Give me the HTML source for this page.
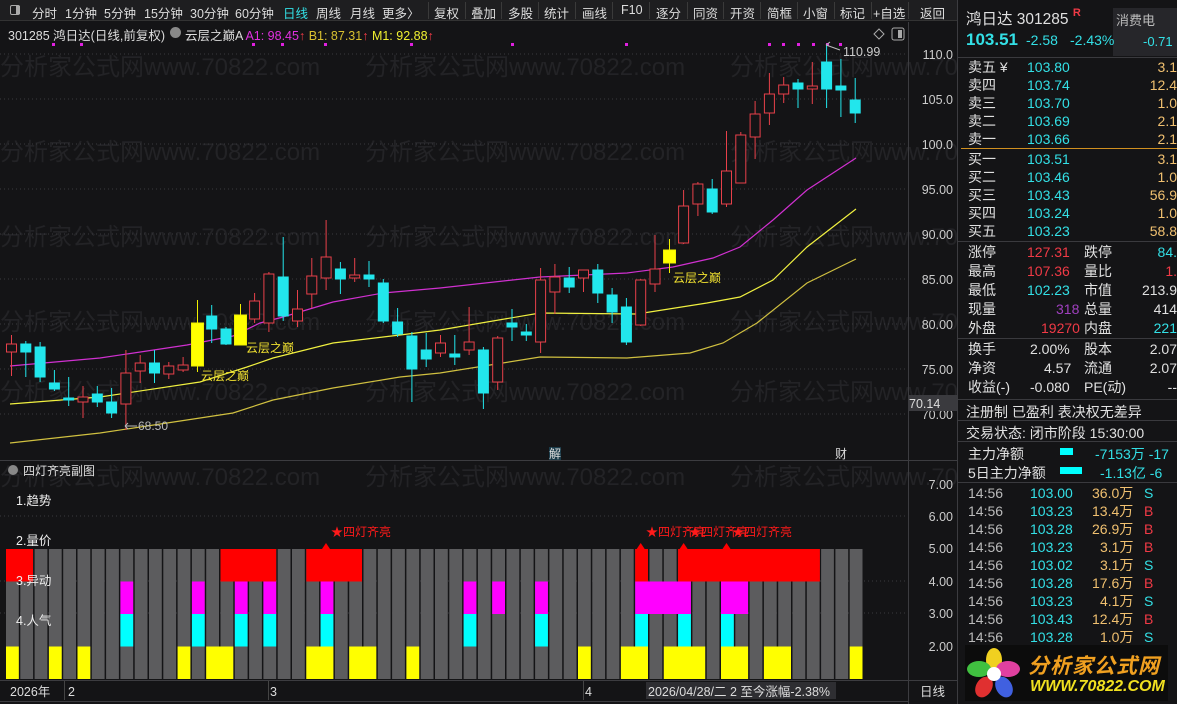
<!DOCTYPE html>
<html><head><meta charset="utf-8"><style>
*{margin:0;padding:0;box-sizing:border-box}
body{width:1177px;height:704px;background:#141416;overflow:hidden;position:relative;font-family:"Liberation Sans","Noto Sans CJK SC",sans-serif;color:#ddd}
.a{position:absolute;white-space:nowrap}
.tb{position:absolute;top:0;left:0;width:958px;height:21px;background:#1e1e20;border-bottom:1px solid #333;font-size:12.5px;color:#ddd}
.tb span{position:absolute;top:3px}
.sep{position:absolute;top:2px;width:1px;height:17px;background:#3a3a3a}
.rp{font-size:14px}
.c{color:#33e0e6}.rd{color:#f03a46}.o{color:#f0c070}.w{color:#e0e0e0}.g{color:#bbb}
.r{text-align:right}
</style></head><body>
<div class="tb">
<div style="position:absolute;left:10px;top:5px;width:10px;height:10px;border:1px solid #aaa;border-radius:2px"><div style="position:absolute;left:5px;top:0;width:4px;height:8px;background:#aaa"></div></div>
<span style="left:32px">分时</span><span style="left:65px">1分钟</span><span style="left:104px">5分钟</span><span style="left:144px">15分钟</span><span style="left:190px">30分钟</span><span style="left:235px">60分钟</span><span style="left:283px;color:#33e0e6">日线</span><span style="left:316px">周线</span><span style="left:350px">月线</span><span style="left:382px">更多〉</span>
<div class="sep" style="left:428px"></div><span style="left:434px">复权</span>
<div class="sep" style="left:465px"></div><span style="left:471px">叠加</span>
<div class="sep" style="left:501px"></div><span style="left:508px">多股</span>
<div class="sep" style="left:538px"></div><span style="left:544px">统计</span>
<div class="sep" style="left:575px"></div><span style="left:582px">画线</span>
<div class="sep" style="left:612px"></div><span style="left:621px">F10</span>
<div class="sep" style="left:649px"></div><span style="left:656px">逐分</span>
<div class="sep" style="left:687px"></div><span style="left:693px">同资</span>
<div class="sep" style="left:723px"></div><span style="left:730px">开资</span>
<div class="sep" style="left:760px"></div><span style="left:767px">简框</span>
<div class="sep" style="left:797px"></div><span style="left:803px">小窗</span>
<div class="sep" style="left:834px"></div><span style="left:840px">标记</span>
<div class="sep" style="left:871px"></div><span style="left:873px">+自选</span>
<div class="sep" style="left:908px"></div><span style="left:920px">返回</span>
</div>
<div class="a" style="left:8px;top:25px;font-size:12.5px;color:#ddd">301285 鸿日达(日线,前复权)</div>
<div class="a" style="left:170px;top:27px;width:11px;height:11px;border-radius:50%;background:#888"></div>
<div class="a" style="left:185px;top:25px;font-size:12.5px;color:#ddd">云层之巅A <span style="color:#e030e0">A1: 98.45</span><span style="color:#f03a46">↑</span> <span style="color:#d8c030">B1: 87.31</span><span style="color:#f03a46">↑</span> <span style="color:#f0f030">M1: 92.88</span><span style="color:#f03a46">↑</span></div>

<svg class="a" style="left:0;top:0" width="958" height="704">
<g fill="#232326" font-size="24" font-family="Liberation Sans,Noto Sans CJK SC,sans-serif">
<text x="0" y="75">分析家公式网www.70822.com</text><text x="365" y="75">分析家公式网www.70822.com</text><text x="730" y="75">分析家公式网www.70822.com</text>
<text x="0" y="160">分析家公式网www.70822.com</text><text x="365" y="160">分析家公式网www.70822.com</text><text x="730" y="160">分析家公式网www.70822.com</text>
<text x="0" y="245">分析家公式网www.70822.com</text><text x="365" y="245">分析家公式网www.70822.com</text><text x="730" y="245">分析家公式网www.70822.com</text>
<text x="0" y="330">分析家公式网www.70822.com</text><text x="365" y="330">分析家公式网www.70822.com</text><text x="730" y="330">分析家公式网www.70822.com</text>
<text x="0" y="400">分析家公式网www.70822.com</text><text x="365" y="400">分析家公式网www.70822.com</text><text x="730" y="400">分析家公式网www.70822.com</text>
<text x="0" y="485">分析家公式网www.70822.com</text><text x="365" y="485">分析家公式网www.70822.com</text><text x="730" y="485">分析家公式网www.70822.com</text>
</g>
<g stroke="#3a3a3e" stroke-dasharray="1 3">
<line x1="0" x2="908" y1="54" y2="54"/><line x1="0" x2="908" y1="99" y2="99"/><line x1="0" x2="908" y1="144" y2="144"/><line x1="0" x2="908" y1="189" y2="189"/><line x1="0" x2="908" y1="234" y2="234"/><line x1="0" x2="908" y1="279" y2="279"/><line x1="0" x2="908" y1="324" y2="324"/><line x1="0" x2="908" y1="369" y2="369"/><line x1="0" x2="908" y1="414" y2="414"/>
<line x1="0" x2="908" y1="516" y2="516"/><line x1="0" x2="908" y1="581" y2="581"/><line x1="0" x2="908" y1="613" y2="613"/>
</g>
<g stroke="#3c3c40"><line x1="908.5" x2="908.5" y1="22" y2="704"/><line x1="957.5" x2="957.5" y1="0" y2="704"/><line x1="0" x2="958" y1="460.5" y2="460.5"/><line x1="0" x2="958" y1="680.5" y2="680.5"/><line x1="0" x2="908" y1="701.5" y2="701.5"/></g>
<g fill="#e020e0"><rect x="52" y="43" width="3" height="3"/><rect x="80" y="43" width="3" height="3"/><rect x="252" y="43" width="3" height="3"/><rect x="281" y="43" width="3" height="3"/><rect x="324" y="43" width="3" height="3"/><rect x="410" y="43" width="3" height="3"/><rect x="511" y="43" width="3" height="3"/><rect x="625" y="43" width="3" height="3"/><rect x="768" y="43" width="3" height="3"/><rect x="782" y="43" width="3" height="3"/><rect x="797" y="43" width="3" height="3"/><rect x="812" y="43" width="3" height="3"/><rect x="826" y="43" width="3" height="3"/><rect x="839" y="43" width="3" height="3"/></g>
<path d="M874 34l5-5 5 5-5 5z" fill="none" stroke="#aaa"/>
<rect x="892" y="28" width="12" height="12" rx="2" fill="none" stroke="#aaa"/><rect x="898" y="30" width="4" height="8" fill="#aaa"/>
<polyline fill="none" stroke="#d030d0" stroke-width="1.2" points="10,366 100,358 187,345 233,336 260,323 283,317 333,302 383,293 440,288 540,277 627,273 673,267 713,258 740,247 773,220 807,190 856,158"/>
<polyline fill="none" stroke="#f0f040" stroke-width="1.2" points="10,404 100,397 200,382 247,367 273,358 333,343 400,335 440,330 540,313 637,314 707,303 740,297 773,280 807,247 856,209"/>
<polyline fill="none" stroke="#d0c040" stroke-width="1.2" points="10,443 100,433 167,423 233,413 273,400 333,388 400,377 440,373 540,357 627,358 690,353 723,343 757,323 807,283 856,259"/>
<g stroke="#e8404a" fill="#141416">
<line x1="11.5" x2="11.5" y1="335" y2="376"/><rect x="6.5" y="344" width="10" height="8"/>
<line x1="83" x2="83" y1="386" y2="418"/><rect x="78" y="397" width="10" height="5"/>
<line x1="125.9" x2="125.9" y1="350" y2="430"/><rect x="120.9" y="373" width="10" height="31"/>
<line x1="140.2" x2="140.2" y1="355" y2="383"/><rect x="135.2" y="363" width="10" height="8"/>
<line x1="168.8" x2="168.8" y1="362" y2="379"/><rect x="163.8" y="366" width="10" height="8"/>
<line x1="183.1" x2="183.1" y1="357" y2="372"/><rect x="178.1" y="365" width="10" height="5"/>
<line x1="254.6" x2="254.6" y1="293" y2="323"/><rect x="249.6" y="301" width="10" height="18"/>
<line x1="268.9" x2="268.9" y1="272" y2="332"/><rect x="263.9" y="274" width="10" height="49"/>
<line x1="297.5" x2="297.5" y1="290" y2="327"/><rect x="292.5" y="309" width="10" height="12"/>
<line x1="311.8" x2="311.8" y1="258" y2="308"/><rect x="306.8" y="276" width="10" height="18"/>
<line x1="326.1" x2="326.1" y1="220" y2="290"/><rect x="321.1" y="257" width="10" height="21"/>
<line x1="354.7" x2="354.7" y1="258" y2="282"/><rect x="349.7" y="275" width="10" height="3"/>
<line x1="440.5" x2="440.5" y1="335" y2="357"/><rect x="435.5" y="343" width="10" height="10"/>
<line x1="469.1" x2="469.1" y1="307" y2="355"/><rect x="464.1" y="342" width="10" height="8"/>
<line x1="497.7" x2="497.7" y1="336" y2="390"/><rect x="492.7" y="338" width="10" height="44"/>
<line x1="540.6" x2="540.6" y1="268" y2="353"/><rect x="535.6" y="280" width="10" height="62"/>
<line x1="554.9" x2="554.9" y1="264" y2="314"/><rect x="549.9" y="277" width="10" height="15"/>
<line x1="583.5" x2="583.5" y1="270" y2="292"/><rect x="578.5" y="270" width="10" height="8"/>
<line x1="640.7" x2="640.7" y1="279" y2="326"/><rect x="635.7" y="280" width="10" height="45"/>
<line x1="655" x2="655" y1="235" y2="292"/><rect x="650" y="269" width="10" height="15"/>
<line x1="683.6" x2="683.6" y1="190" y2="244"/><rect x="678.6" y="206" width="10" height="37"/>
<line x1="697.9" x2="697.9" y1="182" y2="216"/><rect x="692.9" y="184" width="10" height="20"/>
<line x1="726.5" x2="726.5" y1="131" y2="207"/><rect x="721.5" y="171" width="10" height="33"/>
<line x1="740.8" x2="740.8" y1="132" y2="183"/><rect x="735.8" y="135" width="10" height="48"/>
<line x1="755.1" x2="755.1" y1="101" y2="159"/><rect x="750.1" y="114" width="10" height="23"/>
<line x1="769.4" x2="769.4" y1="73" y2="125"/><rect x="764.4" y="94" width="10" height="19"/>
<line x1="783.7" x2="783.7" y1="77" y2="103"/><rect x="778.7" y="85" width="10" height="9"/>
<line x1="812.3" x2="812.3" y1="62" y2="104"/><rect x="807.3" y="86" width="10" height="3"/>
</g>
<g stroke="#22e6ec" fill="#22e6ec">
<line x1="25.8" x2="25.8" y1="341" y2="377"/><rect x="20.8" y="344" width="10" height="8"/>
<line x1="40.1" x2="40.1" y1="342" y2="382"/><rect x="35.1" y="347" width="10" height="30"/>
<line x1="54.4" x2="54.4" y1="370" y2="391"/><rect x="49.4" y="383" width="10" height="6"/>
<line x1="68.7" x2="68.7" y1="377" y2="406"/><rect x="63.7" y="398" width="10" height="2"/>
<line x1="97.3" x2="97.3" y1="386" y2="407"/><rect x="92.3" y="394" width="10" height="8"/>
<line x1="111.6" x2="111.6" y1="388" y2="418"/><rect x="106.6" y="402" width="10" height="11"/>
<line x1="154.5" x2="154.5" y1="350" y2="383"/><rect x="149.5" y="363" width="10" height="10"/>
<line x1="211.7" x2="211.7" y1="305" y2="343"/><rect x="206.7" y="316" width="10" height="13"/>
<line x1="226" x2="226" y1="327" y2="345"/><rect x="221" y="329" width="10" height="15"/>
<line x1="283.2" x2="283.2" y1="237" y2="321"/><rect x="278.2" y="277" width="10" height="39"/>
<line x1="340.4" x2="340.4" y1="262" y2="294"/><rect x="335.4" y="269" width="10" height="10"/>
<line x1="369" x2="369" y1="261" y2="287"/><rect x="364" y="275" width="10" height="4"/>
<line x1="383.3" x2="383.3" y1="279" y2="323"/><rect x="378.3" y="283" width="10" height="38"/>
<line x1="397.6" x2="397.6" y1="308" y2="337"/><rect x="392.6" y="322" width="10" height="12"/>
<line x1="411.9" x2="411.9" y1="332" y2="402"/><rect x="406.9" y="336" width="10" height="33"/>
<line x1="426.2" x2="426.2" y1="333" y2="367"/><rect x="421.2" y="350" width="10" height="9"/>
<line x1="454.8" x2="454.8" y1="335" y2="365"/><rect x="449.8" y="354" width="10" height="3"/>
<line x1="483.4" x2="483.4" y1="347" y2="409"/><rect x="478.4" y="350" width="10" height="43"/>
<line x1="512" x2="512" y1="309" y2="341"/><rect x="507" y="323" width="10" height="4"/>
<line x1="526.3" x2="526.3" y1="324" y2="341"/><rect x="521.3" y="332" width="10" height="3"/>
<line x1="569.2" x2="569.2" y1="267" y2="293"/><rect x="564.2" y="278" width="10" height="9"/>
<line x1="597.8" x2="597.8" y1="264" y2="303"/><rect x="592.8" y="270" width="10" height="23"/>
<line x1="612.1" x2="612.1" y1="288" y2="323"/><rect x="607.1" y="295" width="10" height="17"/>
<line x1="626.4" x2="626.4" y1="298" y2="345"/><rect x="621.4" y="307" width="10" height="35"/>
<line x1="712.2" x2="712.2" y1="179" y2="214"/><rect x="707.2" y="189" width="10" height="23"/>
<line x1="798" x2="798" y1="79" y2="108"/><rect x="793" y="83" width="10" height="6"/>
<line x1="826.6" x2="826.6" y1="45" y2="108"/><rect x="821.6" y="62" width="10" height="27"/>
<line x1="840.9" x2="840.9" y1="59" y2="117"/><rect x="835.9" y="86" width="10" height="4"/>
<line x1="855.2" x2="855.2" y1="78" y2="123"/><rect x="850.2" y="100" width="10" height="13"/>
</g>
<g stroke="#f0f000" fill="#ffff00">
<line x1="197.5" x2="197.5" y1="300" y2="372"/><rect x="191.5" y="323" width="12" height="43"/>
<line x1="240.5" x2="240.5" y1="304" y2="345"/><rect x="234.5" y="315" width="12" height="30"/>
<line x1="669.5" x2="669.5" y1="239" y2="273"/><rect x="663.5" y="250" width="12" height="13"/>
</g>
<path d="M826 45l14 5M826 45l4 -3" stroke="#bbb" fill="none"/>
<text x="843" y="56" fill="#ccc" font-size="12.5" font-family="Liberation Sans">110.99</text>
<path d="M125 426h12M125 426l3 -3M125 426l3 3" stroke="#bbb" fill="none"/>
<text x="138" y="430" fill="#bbb" font-size="12" font-family="Liberation Sans">68.50</text>
<g fill="#f0e030" font-size="12" font-family="Liberation Sans,Noto Sans CJK SC,sans-serif">
<text x="201" y="380">云层之巅</text><text x="246" y="352">云层之巅</text><text x="673" y="282">云层之巅</text>
</g>
<rect x="549" y="447" width="12" height="13" fill="#1a3a48"/>
<text x="549" y="458" fill="#ddd" font-size="12" font-family="Noto Sans CJK SC,sans-serif">解</text>
<text x="835" y="458" fill="#ddd" font-size="12" font-family="Noto Sans CJK SC,sans-serif">财</text>
<g fill="#ccc" font-size="12.5" font-family="Liberation Sans" text-anchor="end">
<text x="953" y="59">110.0</text><text x="953" y="104">105.0</text><text x="953" y="149">100.0</text><text x="953" y="194">95.00</text><text x="953" y="239">90.00</text><text x="953" y="284">85.00</text><text x="953" y="329">80.00</text><text x="953" y="374">75.00</text><text x="953" y="419">70.00</text>
<text x="953" y="489">7.00</text><text x="953" y="521">6.00</text><text x="953" y="553">5.00</text><text x="953" y="586">4.00</text><text x="953" y="618">3.00</text><text x="953" y="651">2.00</text>
</g>
<rect x="908" y="395" width="49" height="16" fill="#3a3a3e"/>
<text x="909" y="408" fill="#ddd" font-size="12.5" font-family="Liberation Sans">70.14</text>
<g fill="#5c5c5e">
<rect x="6" y="549" width="12.8" height="130"/><rect x="20.3" y="549" width="12.8" height="130"/><rect x="34.6" y="549" width="12.8" height="130"/><rect x="48.9" y="549" width="12.8" height="130"/><rect x="63.2" y="549" width="12.8" height="130"/><rect x="77.5" y="549" width="12.8" height="130"/><rect x="91.8" y="549" width="12.8" height="130"/><rect x="106.1" y="549" width="12.8" height="130"/><rect x="120.4" y="549" width="12.8" height="130"/><rect x="134.7" y="549" width="12.8" height="130"/><rect x="149" y="549" width="12.8" height="130"/><rect x="163.3" y="549" width="12.8" height="130"/><rect x="177.6" y="549" width="12.8" height="130"/><rect x="191.9" y="549" width="12.8" height="130"/><rect x="206.2" y="549" width="12.8" height="130"/><rect x="220.5" y="549" width="12.8" height="130"/><rect x="234.8" y="549" width="12.8" height="130"/><rect x="249.1" y="549" width="12.8" height="130"/><rect x="263.4" y="549" width="12.8" height="130"/><rect x="277.7" y="549" width="12.8" height="130"/><rect x="292" y="549" width="12.8" height="130"/><rect x="306.3" y="549" width="12.8" height="130"/><rect x="320.6" y="549" width="12.8" height="130"/><rect x="334.9" y="549" width="12.8" height="130"/><rect x="349.2" y="549" width="12.8" height="130"/><rect x="363.5" y="549" width="12.8" height="130"/><rect x="377.8" y="549" width="12.8" height="130"/><rect x="392.1" y="549" width="12.8" height="130"/><rect x="406.4" y="549" width="12.8" height="130"/><rect x="420.7" y="549" width="12.8" height="130"/><rect x="435" y="549" width="12.8" height="130"/><rect x="449.3" y="549" width="12.8" height="130"/><rect x="463.6" y="549" width="12.8" height="130"/><rect x="477.9" y="549" width="12.8" height="130"/><rect x="492.2" y="549" width="12.8" height="130"/><rect x="506.5" y="549" width="12.8" height="130"/><rect x="520.8" y="549" width="12.8" height="130"/><rect x="535.1" y="549" width="12.8" height="130"/><rect x="549.4" y="549" width="12.8" height="130"/><rect x="563.7" y="549" width="12.8" height="130"/><rect x="578" y="549" width="12.8" height="130"/><rect x="592.3" y="549" width="12.8" height="130"/><rect x="606.6" y="549" width="12.8" height="130"/><rect x="620.9" y="549" width="12.8" height="130"/><rect x="635.2" y="549" width="12.8" height="130"/><rect x="649.5" y="549" width="12.8" height="130"/><rect x="663.8" y="549" width="12.8" height="130"/><rect x="678.1" y="549" width="12.8" height="130"/><rect x="692.4" y="549" width="12.8" height="130"/><rect x="706.7" y="549" width="12.8" height="130"/><rect x="721" y="549" width="12.8" height="130"/><rect x="735.3" y="549" width="12.8" height="130"/><rect x="749.6" y="549" width="12.8" height="130"/><rect x="763.9" y="549" width="12.8" height="130"/><rect x="778.2" y="549" width="12.8" height="130"/><rect x="792.5" y="549" width="12.8" height="130"/><rect x="806.8" y="549" width="12.8" height="130"/><rect x="821.1" y="549" width="12.8" height="130"/><rect x="835.4" y="549" width="12.8" height="130"/><rect x="849.7" y="549" width="12.8" height="130"/>
</g>
<g fill="#ff0000">
<rect x="6" y="549" width="27" height="32.5"/><rect x="220.5" y="549" width="55.7" height="32.5"/><rect x="306.3" y="549" width="55.7" height="32.5"/><rect x="635.2" y="549" width="12.8" height="32.5"/><rect x="678.1" y="549" width="141.8" height="32.5"/>
</g>
<g fill="#ff00ff">
<rect x="120.4" y="581.5" width="12.8" height="32.5"/><rect x="191.9" y="581.5" width="12.8" height="32.5"/><rect x="234.8" y="581.5" width="12.8" height="32.5"/><rect x="263.4" y="581.5" width="12.8" height="32.5"/><rect x="320.6" y="581.5" width="12.8" height="32.5"/><rect x="463.6" y="581.5" width="12.8" height="32.5"/><rect x="492.2" y="581.5" width="12.8" height="32.5"/><rect x="535.1" y="581.5" width="12.8" height="32.5"/><rect x="635.2" y="581.5" width="55.7" height="32.5"/><rect x="721" y="581.5" width="27.1" height="32.5"/>
</g>
<g fill="#00ffff">
<rect x="120.4" y="614" width="12.8" height="32.5"/><rect x="191.9" y="614" width="12.8" height="32.5"/><rect x="234.8" y="614" width="12.8" height="32.5"/><rect x="263.4" y="614" width="12.8" height="32.5"/><rect x="320.6" y="614" width="12.8" height="32.5"/><rect x="463.6" y="614" width="12.8" height="32.5"/><rect x="535.1" y="614" width="12.8" height="32.5"/><rect x="635.2" y="614" width="12.8" height="32.5"/><rect x="678.1" y="614" width="12.8" height="32.5"/><rect x="721" y="614" width="12.8" height="32.5"/>
</g>
<g fill="#ffff00">
<rect x="6" y="646.5" width="12.8" height="32.5"/><rect x="48.9" y="646.5" width="12.8" height="32.5"/><rect x="77.5" y="646.5" width="12.8" height="32.5"/><rect x="177.6" y="646.5" width="12.8" height="32.5"/><rect x="206.2" y="646.5" width="27.1" height="32.5"/><rect x="306.3" y="646.5" width="27.1" height="32.5"/><rect x="349.2" y="646.5" width="27.1" height="32.5"/><rect x="406.4" y="646.5" width="12.8" height="32.5"/><rect x="578" y="646.5" width="12.8" height="32.5"/><rect x="620.9" y="646.5" width="27.1" height="32.5"/><rect x="663.8" y="646.5" width="41.4" height="32.5"/><rect x="721" y="646.5" width="27.1" height="32.5"/><rect x="763.9" y="646.5" width="27.1" height="32.5"/><rect x="849.7" y="646.5" width="12.8" height="32.5"/>
</g>
<g fill="#ff0000"><path d="M326 543l4 6h-8z"/><path d="M640.7 543l4 6h-8z"/><path d="M683.6 543l4 6h-8z"/><path d="M726.5 543l4 6h-8z"/></g>
<g fill="#ff1a1a" font-size="12" font-family="Liberation Sans,Noto Sans CJK SC,sans-serif">
<text x="331" y="536">★四灯齐亮</text><text x="646" y="536">★四灯齐亮</text><text x="689" y="536">★四灯齐亮</text><text x="732" y="536">★四灯齐亮</text>
</g>
<g fill="#eee" font-size="12.5" font-family="Liberation Sans,Noto Sans CJK SC,sans-serif">
<text x="16" y="505">1.趋势</text><text x="16" y="545">2.量价</text><text x="16" y="585">3.异动</text><text x="16" y="625">4.人气</text>
</g>
<circle cx="13" cy="470" r="5" fill="#888"/>
<text x="23" y="475" fill="#ddd" font-size="12" font-family="Liberation Sans,Noto Sans CJK SC,sans-serif">四灯齐亮副图</text>
<rect x="646" y="682" width="190" height="17" fill="#2e2e32"/>
<g fill="#ddd" font-size="12.5" font-family="Liberation Sans,Noto Sans CJK SC,sans-serif">
<text x="10" y="696">2026年</text><text x="68" y="696">2</text><text x="270" y="696">3</text><text x="585" y="696">4</text><text x="648" y="696">2026/04/28/二 2 至今涨幅-2.38%</text><text x="920" y="696">日线</text>
</g>
<g stroke="#444"><line x1="64.5" x2="64.5" y1="681" y2="700"/><line x1="268.5" x2="268.5" y1="681" y2="700"/><line x1="583.5" x2="583.5" y1="681" y2="700"/></g>
</svg>

<div class="a rp" style="left:958px;top:0;width:219px;height:704px;background:#141416"></div>
<div class="a" style="left:1113px;top:8px;width:64px;height:48px;background:#26262a"></div>
<div class="a w" style="left:966px;top:7px;font-size:15.5px">鸿日达 301285 <span style="color:#f03a46;font-size:11px;font-weight:bold;vertical-align:top">R</span></div>
<div class="a g" style="left:1116px;top:10px;font-size:13px">消费电</div>
<div class="a c" style="left:966px;top:30px;font-size:17px;font-weight:bold">103.51</div>
<div class="a c" style="left:1026px;top:32px;font-size:14px">-2.58</div>
<div class="a c" style="left:1070px;top:32px;font-size:14px">-2.43%</div>
<div class="a c" style="left:1143px;top:34px;font-size:13px">-0.71</div>
<div class="a" style="left:958px;top:57px;width:219px;height:1px;background:#3a3a3e"></div>
<div class="a" style="left:961px;top:148px;width:216px;height:1px;background:#d09020"></div>
<div class="a" style="left:958px;top:241px;width:219px;height:1px;background:#3a3a3e"></div>
<div class="a" style="left:958px;top:338px;width:219px;height:1px;background:#3a3a3e"></div>
<div class="a" style="left:958px;top:399px;width:219px;height:1px;background:#3a3a3e"></div>
<div class="a" style="left:958px;top:420px;width:219px;height:1px;background:#3a3a3e"></div>
<div class="a" style="left:958px;top:441px;width:219px;height:1px;background:#3a3a3e"></div>
<div class="a" style="left:958px;top:482px;width:219px;height:1px;background:#3a3a3e"></div>
<div class="a rp" style="left:968px;top:58px;width:209px;line-height:18px">
<div style="position:relative;height:18px"><span class="w">卖五 ¥</span><span class="a c" style="left:59px">103.80</span><span class="a o r" style="right:0">3.1</span></div>
<div style="position:relative;height:18px"><span class="w">卖四</span><span class="a c" style="left:59px">103.74</span><span class="a o r" style="right:0">12.4</span></div>
<div style="position:relative;height:18px"><span class="w">卖三</span><span class="a c" style="left:59px">103.70</span><span class="a o r" style="right:0">1.0</span></div>
<div style="position:relative;height:18px"><span class="w">卖二</span><span class="a c" style="left:59px">103.69</span><span class="a o r" style="right:0">2.1</span></div>
<div style="position:relative;height:18px"><span class="w">卖一</span><span class="a c" style="left:59px">103.66</span><span class="a o r" style="right:0">2.1</span></div>
<div style="position:relative;height:2px"></div>
<div style="position:relative;height:18px"><span class="w">买一</span><span class="a c" style="left:59px">103.51</span><span class="a o r" style="right:0">3.1</span></div>
<div style="position:relative;height:18px"><span class="w">买二</span><span class="a c" style="left:59px">103.46</span><span class="a o r" style="right:0">1.0</span></div>
<div style="position:relative;height:18px"><span class="w">买三</span><span class="a c" style="left:59px">103.43</span><span class="a o r" style="right:0">56.9</span></div>
<div style="position:relative;height:18px"><span class="w">买四</span><span class="a c" style="left:59px">103.24</span><span class="a o r" style="right:0">1.0</span></div>
<div style="position:relative;height:18px"><span class="w">买五</span><span class="a c" style="left:59px">103.23</span><span class="a o r" style="right:0">58.8</span></div>
</div>
<div class="a rp" style="left:968px;top:243px;width:209px;line-height:19px">
<div style="position:relative;height:19px"><span class="w">涨停</span><span class="a rd" style="left:59px">127.31</span><span class="a w" style="left:116px">跌停</span><span class="a c r" style="right:0">84.</span></div>
<div style="position:relative;height:19px"><span class="w">最高</span><span class="a rd" style="left:59px">107.36</span><span class="a w" style="left:116px">量比</span><span class="a rd r" style="right:0">1.</span></div>
<div style="position:relative;height:19px"><span class="w">最低</span><span class="a c" style="left:59px">102.23</span><span class="a w" style="left:116px">市值</span><span class="a w r" style="right:0">213.9</span></div>
<div style="position:relative;height:19px"><span class="w">现量</span><span class="a" style="left:88px;color:#a040c0">318</span><span class="a w" style="left:116px">总量</span><span class="a w r" style="right:0">414</span></div>
<div style="position:relative;height:19px"><span class="w">外盘</span><span class="a rd" style="left:73px">19270</span><span class="a w" style="left:116px">内盘</span><span class="a c r" style="right:0">221</span></div>
</div>
<div class="a rp" style="left:968px;top:340px;width:209px;line-height:19px">
<div style="position:relative;height:19px"><span class="w">换手</span><span class="a w" style="left:62px">2.00%</span><span class="a w" style="left:116px">股本</span><span class="a w r" style="right:0">2.07</span></div>
<div style="position:relative;height:19px"><span class="w">净资</span><span class="a w" style="left:76px">4.57</span><span class="a w" style="left:116px">流通</span><span class="a w r" style="right:0">2.07</span></div>
<div style="position:relative;height:19px"><span class="w">收益(-)</span><span class="a w" style="left:62px">-0.080</span><span class="a w" style="left:116px">PE(动)</span><span class="a w r" style="right:0">--</span></div>
</div>
<div class="a w rp" style="left:966px;top:402px">注册制 已盈利 表决权无差异</div>
<div class="a w rp" style="left:966px;top:423px">交易状态: 闭市阶段 15:30:00</div>
<div class="a w rp" style="left:968px;top:444px">主力净额</div>
<div class="a" style="left:1060px;top:448px;width:13px;height:7px;background:#00ffff"></div>
<div class="a c rp" style="left:1095px;top:444px">-7153万 -17</div>
<div class="a w rp" style="left:968px;top:463px">5日主力净额</div>
<div class="a" style="left:1060px;top:467px;width:22px;height:7px;background:#00ffff"></div>
<div class="a c rp" style="left:1100px;top:463px">-1.13亿 -6</div>
<div class="a rp" style="left:968px;top:484px;width:209px;line-height:18px">
<div style="position:relative;height:18px"><span class="g">14:56</span><span class="a c" style="left:62px">103.00</span><span class="a o" style="left:124px">36.0万</span><span class="a c" style="left:176px">S</span></div>
<div style="position:relative;height:18px"><span class="g">14:56</span><span class="a c" style="left:62px">103.23</span><span class="a o" style="left:124px">13.4万</span><span class="a rd" style="left:176px">B</span></div>
<div style="position:relative;height:18px"><span class="g">14:56</span><span class="a c" style="left:62px">103.28</span><span class="a o" style="left:124px">26.9万</span><span class="a rd" style="left:176px">B</span></div>
<div style="position:relative;height:18px"><span class="g">14:56</span><span class="a c" style="left:62px">103.23</span><span class="a o" style="left:132px">3.1万</span><span class="a rd" style="left:176px">B</span></div>
<div style="position:relative;height:18px"><span class="g">14:56</span><span class="a c" style="left:62px">103.02</span><span class="a o" style="left:132px">3.1万</span><span class="a c" style="left:176px">S</span></div>
<div style="position:relative;height:18px"><span class="g">14:56</span><span class="a c" style="left:62px">103.28</span><span class="a o" style="left:124px">17.6万</span><span class="a rd" style="left:176px">B</span></div>
<div style="position:relative;height:18px"><span class="g">14:56</span><span class="a c" style="left:62px">103.23</span><span class="a o" style="left:132px">4.1万</span><span class="a c" style="left:176px">S</span></div>
<div style="position:relative;height:18px"><span class="g">14:56</span><span class="a c" style="left:62px">103.43</span><span class="a o" style="left:124px">12.4万</span><span class="a rd" style="left:176px">B</span></div>
<div style="position:relative;height:18px"><span class="g">14:56</span><span class="a c" style="left:62px">103.28</span><span class="a o" style="left:132px">1.0万</span><span class="a c" style="left:176px">S</span></div>
</div>
<div class="a" style="left:965px;top:645px;width:203px;height:56px;background:#0c0c0c"></div>
<svg class="a" style="left:966px;top:647px" width="56" height="54">
<ellipse cx="28" cy="13" rx="8" ry="12" fill="#f0d020"/>
<ellipse cx="42" cy="22" rx="12" ry="8" fill="#e040a0"/>
<ellipse cx="38" cy="40" rx="8" ry="11" fill="#4060e0" transform="rotate(-30 38 40)"/>
<ellipse cx="18" cy="40" rx="8" ry="11" fill="#e03030" transform="rotate(30 18 40)"/>
<ellipse cx="13" cy="22" rx="12" ry="8" fill="#40c040"/>
<circle cx="28" cy="27" r="7" fill="#fff"/>
</svg>
<div class="a" style="left:1028px;top:650px;font-size:21px;font-weight:bold;color:#f0a020;font-style:italic;letter-spacing:1px">分析家公式网</div>
<div class="a" style="left:1030px;top:678px;font-size:16px;font-weight:bold;color:#f0e020;font-style:italic">WWW.70822.COM</div>
</body></html>
